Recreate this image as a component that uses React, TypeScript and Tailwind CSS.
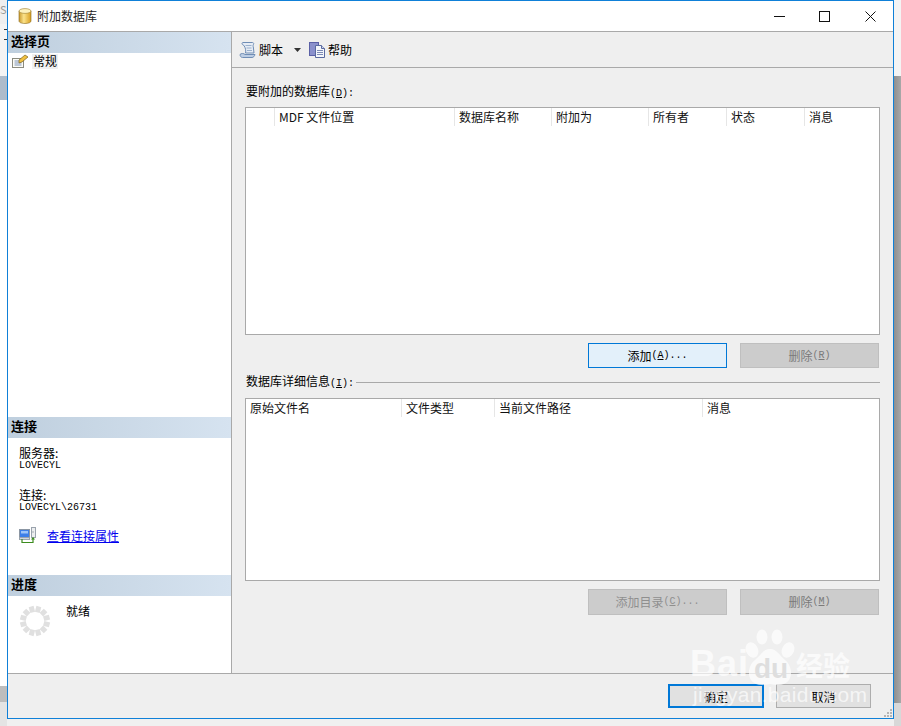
const cjk = { fontFamily: '"Noto Sans CJK SC", sans-serif' };

function DbIcon() {
  return (
    <svg width="14" height="16" viewBox="0 0 14 16">
      <defs>
        <linearGradient id="dbg" x1="0" x2="1" y1="0" y2="0">
          <stop offset="0" stopColor="#c99a2e" />
          <stop offset="0.4" stopColor="#fbe38a" />
          <stop offset="1" stopColor="#d99f1f" />
        </linearGradient>
      </defs>
      <path d="M1 3v10c0 1.5 2.5 2.5 6 2.5s6-1 6-2.5V3z" fill="url(#dbg)" stroke="#8a6a1c" strokeWidth="0.6" />
      <ellipse cx="7" cy="3" rx="6" ry="2.4" fill="#fdf2bd" stroke="#9c7c28" strokeWidth="0.6" />
    </svg>
  );
}

function ScrollIcon() {
  return (
    <svg width="17" height="16" viewBox="0 0 17 16">
      <path d="M3 1.500c0-.6.500-1 1-1h9.500c1 0 1.500 1 1 1.800-.6 1-.5 1.700-.2 2.700l.7 6H6.500c.6-2.500 0-5-1.500-7.500C4 3 3 2.500 3 1.500z" fill="#e6ecf5" stroke="#6f8db5" />
      <path d="M1 12.500c1-1.300 4-1.300 5 0h10c-.5 1.800-1.700 3-3 3H3.500C2 15.500 1 14 1 12.500z" fill="#bccde4" stroke="#6f8db5" />
      <path d="M6.500 3.500h6M7.500 6h5M8 8.500h5" stroke="#9ab0cc" />
    </svg>
  );
}

function HelpIcon() {
  return (
    <svg width="17" height="16" viewBox="0 0 17 16">
      <rect x="0.500" y="0.500" width="9" height="13" fill="#8a90cc" stroke="#5a60a6" />
      <path d="M6.500 3.500h6l3 3v9h-9z" fill="#f4f6fb" stroke="#5a6aa0" />
      <path d="M12.500 3.500v3h3" fill="#cfd6ea" stroke="#5a6aa0" />
      <path d="M8 8.500h6M8 10.500h6M8 12.500h6" stroke="#7d8bb5" />
    </svg>
  );
}

function PageIcon() {
  return (
    <svg width="17" height="14" viewBox="0 0 17 14">
      <rect x="0.500" y="4.500" width="11" height="9" fill="#fbfbf6" stroke="#8b8b80" />
      <path d="M2.500 7h7M2.500 9h7M2.500 11h7" stroke="#7f93b5" />
      <path d="M7 6l6-5 3 2-6 5-3 1z" fill="#f0c040" stroke="#7d6420" strokeWidth="0.7" />
    </svg>
  );
}

function ConnIcon() {
  return (
    <svg width="18" height="17" viewBox="0 0 18 17">
      <rect x="0.500" y="2.500" width="10" height="8" fill="#3d7fe8" stroke="#8b96a3" />
      <rect x="2" y="4" width="7" height="2.500" fill="#9cc4f8" />
      <rect x="0.500" y="10.500" width="10" height="2" fill="#d2d8de" stroke="#9aa3ad" />
      <rect x="12.500" y="0.500" width="4" height="10" fill="#eceef0" stroke="#9aa3ad" />
      <path d="M14.500 5h-1" stroke="#5f6a75" />
      <path d="M3 12v3.500h11V12" fill="none" stroke="#3c8c1e" strokeWidth="1.200" />
      <path d="M12 12.500l2-2.500 2 2.500z" fill="#3c8c1e" />
    </svg>
  );
}

function Spinner() {
  const marks = Array.from({ length: 12 }, (_, i) => i * 30 + 15);
  return (
    <svg width="32" height="32" viewBox="0 0 32 32">
      {marks.map((a) => (
        <rect key={a} x="13.500" y="1" width="5" height="6" fill="#e0e0e0" transform={`rotate(${a} 16 16)`} />
      ))}
    </svg>
  );
}

function PanelHeader({ title }: { title: string }) {
  return (
    <div className="h-[21px] flex items-center pl-[3px] pb-[4px] text-[13px] font-bold leading-none text-black bg-gradient-to-r from-[#bfcfde] to-[#d6e3f0]">
      {title}
    </div>
  );
}

function Grip() {
  return (
    <svg width="9" height="9" viewBox="0 0 9 9" className="absolute right-[1px] bottom-[1px]">
      {[[7, 1], [4, 4], [7, 4], [1, 7], [4, 7], [7, 7]].map(([x, y]) => (
        <rect key={`${x}-${y}`} x={x} y={y} width="2" height="2" fill="#b5b5b5" />
      ))}
    </svg>
  );
}

function Watermark() {
  return (
    <div className="absolute left-[690px] top-[629px] w-[170px] h-[76px] text-white/70 pointer-events-none" style={{ fontFamily: '"Liberation Sans", sans-serif' }}>
      <span className="absolute left-0 top-[12px] text-[36px] leading-[46px] font-bold tracking-[1px]">Bai</span>
      <svg className="absolute left-[54px] top-0" width="52" height="57" viewBox="0 0 52 57" fill="currentColor">
        <ellipse cx="8" cy="21" rx="6" ry="8" transform="rotate(-25 8 21)" />
        <ellipse cx="18" cy="8" rx="5.500" ry="7.500" />
        <ellipse cx="33" cy="8" rx="5.500" ry="7.500" />
        <ellipse cx="44" cy="21" rx="6" ry="8" transform="rotate(25 44 21)" />
        <path d="M26 20c7 0 9 6 15 11 9 7 9 25-7 25-4 0-6-1-8-1s-4 1-8 1C2 56 2 38 11 31c6-5 8-11 15-11z" />
      </svg>
      <span className="absolute left-[64px] top-[26px] text-[28px] leading-[28px] font-bold text-[#dedede]">du</span>
      <span className="absolute left-[106px] top-[19px] text-[27px] leading-[34px] font-bold" style={cjk}>经验</span>
      <span className="absolute left-[3px] top-[56px] text-[21px] leading-[20px] tracking-[0.3px]">jingyan.baidu.com</span>
    </div>
  );
}

function Btn({ label, keyName, suffix = '', kind = 'disabled', className = '' }: { label: string; keyName: string; suffix?: string; kind?: 'active' | 'disabled' | 'dim'; className?: string }) {
  const styles = {
    active: 'border-[#0078d7] bg-[#e3f0fa] text-black',
    disabled: 'border-[#bfbfbf] bg-[#cccccc] text-[#7a7a7a]',
    dim: 'border-[#bfbfbf] bg-[#cccccc] text-[#8f8f8f]',
  }[kind];
  return (
    <div className={`h-[25px] w-[139px] border flex items-center justify-center text-xs leading-none ${styles} ${className}`}>
      {label}
      <span className="text-[10px] font-['Liberation_Mono'] leading-none">
        (<u>{keyName}</u>){suffix}
      </span>
    </div>
  );
}

const topCols = [
  { w: 'w-[29px]', t: '' },
  { w: 'w-[180px]', t: 'MDF 文件位置' },
  { w: 'w-[97px]', t: '数据库名称' },
  { w: 'w-[97px]', t: '附加为' },
  { w: 'w-[78px]', t: '所有者' },
  { w: 'w-[78px]', t: '状态' },
  { w: 'flex-1', t: '消息' },
];

const bottomCols = [
  { w: 'w-[156px]', t: '原始文件名' },
  { w: 'w-[93px]', t: '文件类型' },
  { w: 'w-[208px]', t: '当前文件路径' },
  { w: 'flex-1', t: '消息' },
];

function GridHead({ cols }: { cols: { w: string; t: string }[] }) {
  return (
    <div className="flex h-[18px]">
      {cols.map((c, i) => (
        <div key={i} className={`${c.w} h-full pl-[4px] pt-[1px] text-xs leading-[16px] text-[#111] whitespace-nowrap ${i < cols.length - 1 ? 'border-r border-[#e6e6e6]' : ''}`}>
          {c.t}
        </div>
      ))}
    </div>
  );
}

export default function App() {
  return (
    <div className="relative w-[901px] h-[726px] overflow-hidden flex bg-[#f0f0f0] text-black" style={cjk}>
      {/* window behind the dialog */}
      <div className="w-[7px] h-full flex flex-col shrink-0">
        <div className="h-[24px] bg-[#efefef] text-[#999] text-[11px] leading-[18px]">S</div>
        <div className="h-[52px] bg-[#f4f4f4] flex flex-col items-end pt-[5px] gap-[9px]">
          <div className="w-[3px] h-px bg-[#333]" />
          <div className="w-[3px] h-px bg-[#333]" />
        </div>
        <div className="h-[24px] bg-[#aebccb]" />
        <div className="flex-1 bg-white" />
        <div className="h-[16px] bg-[#bdbdbd]" />
        <div className="h-[24px] bg-[#e4e4e4]" />
      </div>

      <div className="w-[887px] h-[719px] border border-[#0f80d8] flex flex-col bg-[#efefef] shrink-0 relative">
        {/* title bar */}
        <div className="h-[30px] bg-white flex items-center shrink-0 pl-[10px]">
          <DbIcon />
          <span className="ml-[5px] text-xs leading-none text-[#222]">附加数据库</span>
          <div className="ml-auto flex items-center pr-[17px]">
            <svg width="11" height="11" viewBox="0 0 11 11"><path d="M0 5.500h11" stroke="#111" /></svg>
            <svg className="ml-[34px]" width="11" height="11" viewBox="0 0 11 11"><rect x="0.500" y="0.500" width="10" height="10" fill="none" stroke="#111" /></svg>
            <svg className="ml-[35px]" width="11" height="11" viewBox="0 0 11 11"><path d="M0.500 0.500l10 10M10.500 0.500l-10 10" stroke="#111" /></svg>
          </div>
        </div>

        <div className="flex-1 flex border-t border-[#a9a9a9] min-h-0">
          {/* left panel */}
          <div className="w-[223px] shrink-0 bg-white flex flex-col">
            <PanelHeader title="选择页" />
            <div className="flex items-center h-[16px] pl-[4px]">
              <PageIcon />
              <span className="ml-[3px] text-xs leading-none bg-[#f0f0f0] px-[1px] py-[1.500px]">常规</span>
            </div>
            <div className="h-[348px] shrink-0" />
            <PanelHeader title="连接" />
            <div className="pl-[11px] pt-[9px] h-[137px] shrink-0 text-xs">
              <div className="leading-[12px]">服务器:</div>
              <div className="text-[10px] font-['Liberation_Mono'] leading-[13px]">LOVECYL</div>
              <div className="leading-[12px] mt-[17px]">连接:</div>
              <div className="text-[10px] font-['Liberation_Mono'] leading-[13px]">LOVECYL\26731</div>
              <div className="flex items-center mt-[13px]">
                <ConnIcon />
                <a className="ml-[10px] text-xs leading-[14px] text-[#0000ee] underline">查看连接属性</a>
              </div>
            </div>
            <PanelHeader title="进度" />
            <div className="flex pl-[11px] pt-[9px] flex-1">
              <Spinner />
              <span className="ml-[15px] -mt-[1px] text-xs leading-[14px]">就绪</span>
            </div>
          </div>

          {/* right panel */}
          <div className="flex-1 border-l border-[#a9a9a9] flex flex-col min-w-0">
            <div className="h-[36px] shrink-0 border-b border-[#a9a9a9] flex items-center pl-[7px] text-xs leading-none">
              <ScrollIcon />
              <span className="ml-[3px]">脚本</span>
              <svg className="ml-[11px]" width="7" height="4" viewBox="0 0 7 4"><path d="M0 0h7L3.500 4z" fill="#333" /></svg>
              <span className="ml-[8px]"><HelpIcon /></span>
              <span className="ml-[2px]">帮助</span>
            </div>
            <div className="pl-[13px] pr-[13px] flex-1 flex flex-col">
              <div className="mt-[16px] h-[14px] pl-[1px] text-xs leading-[14px]">
                要附加的数据库<span className="text-[10px] font-['Liberation_Mono']">(<u>D</u>):</span>
              </div>
              <div className="mt-[9px] h-[228px] border border-[#a9a9a9] bg-white shrink-0">
                <GridHead cols={topCols} />
              </div>
              <div className="mt-[8px] flex justify-end gap-[13px] pr-[1px]">
                <Btn label="添加" keyName="A" suffix="..." kind="active" />
                <Btn label="删除" keyName="R" />
              </div>
              <div className="mt-[7px] h-[14px] pl-[1px] flex items-center text-xs leading-[14px]">
                <span className="whitespace-nowrap">数据库详细信息<span className="text-[10px] font-['Liberation_Mono']">(<u>I</u>):</span></span>
                <div className="flex-1 ml-[2px] border-t border-[#a9a9a9]" />
              </div>
              <div className="mt-[9px] h-[183px] border border-[#a9a9a9] bg-white shrink-0">
                <GridHead cols={bottomCols} />
              </div>
              <div className="mt-[8px] flex justify-end gap-[13px] pr-[1px]">
                <Btn label="添加目录" keyName="C" suffix="..." kind="dim" className="h-[26px]" />
                <Btn label="删除" keyName="M" className="h-[26px]" />
              </div>
            </div>
          </div>
        </div>

        {/* footer */}
        <div className="h-[45px] shrink-0 border-t border-[#a9a9a9] flex justify-end items-start pt-[10px] pr-[22px] gap-[12px] text-xs leading-none">
          <div className="w-[96px] h-[24px] pt-[1px] border-2 border-[#0078d7] bg-[#e1e1e1] flex items-center justify-center">确定</div>
          <div className="w-[95px] h-[24px] pt-[1px] border border-[#adadad] bg-[#e1e1e1] flex items-center justify-center">取消</div>
        </div>
        <Grip />
      </div>

      <div className="flex-1 h-full flex flex-col">
        <div className="h-[76px] bg-[#f4f4f4]" />
        <div className="flex-1 bg-gradient-to-r from-[#8f8f8f] to-[#a8a8a8]" />
        <div className="h-[23px] bg-[#d8d8d8]" />
      </div>

      <Watermark />
    </div>
  );
}
